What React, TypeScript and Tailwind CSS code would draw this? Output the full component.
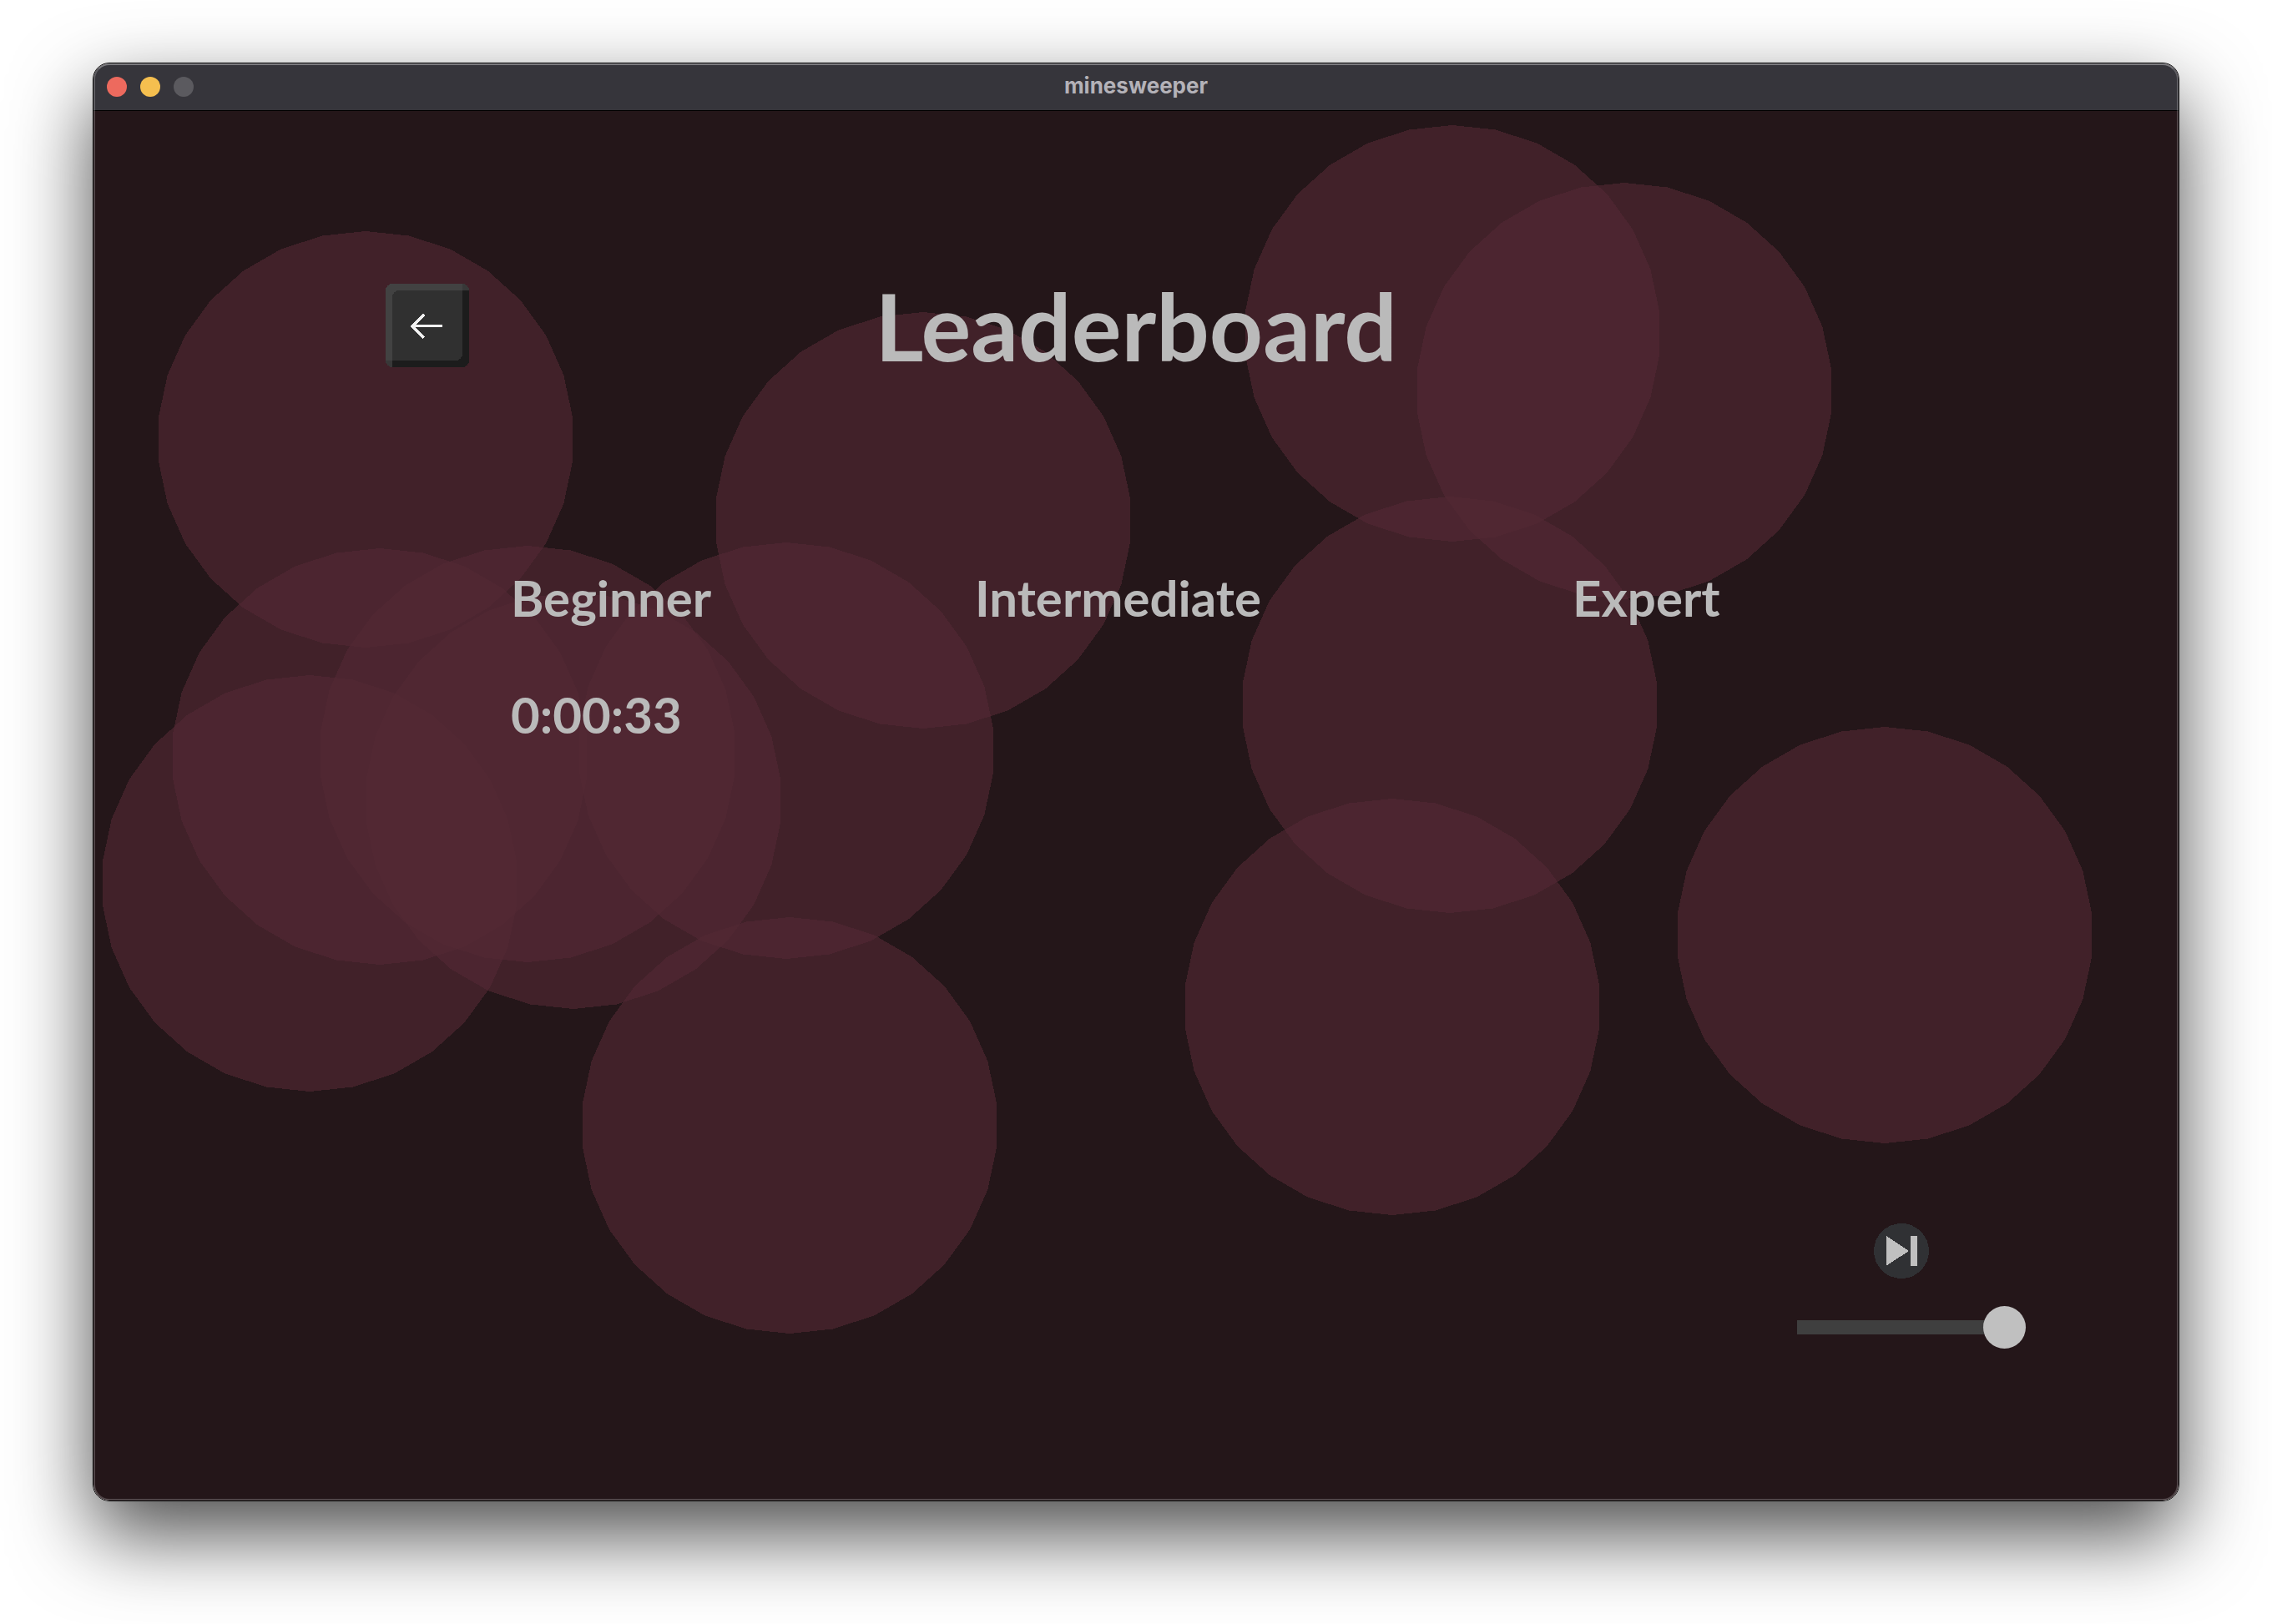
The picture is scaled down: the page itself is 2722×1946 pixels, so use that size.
import { useState } from "react";

const bubbles = [
  { x: 326, y: 394 },
  { x: 1834, y: 336 },
  { x: 1628, y: 267 },
  { x: 994, y: 491 },
  { x: 1625, y: 712 },
  { x: 1556, y: 1074 },
  { x: 2146, y: 988 },
  { x: 834, y: 1216 },
  { x: 830, y: 767 },
  { x: 343, y: 774 },
  { x: 520, y: 771 },
  { x: 575, y: 827 },
  { x: 259, y: 926 },
];

const RADIUS = 249.5;
const SIDES = 30;

function bubblePoints(cx: number, cy: number) {
  return Array.from({ length: SIDES }, (_, i) => {
    const a = (i / SIDES) * Math.PI * 2 - Math.PI / 2;
    return `${(cx + RADIUS * Math.cos(a)).toFixed(1)},${(cy + RADIUS * Math.sin(a)).toFixed(1)}`;
  }).join(" ");
}

function Bubbles() {
  return (
    <svg
      aria-hidden="true"
      className="pointer-events-none absolute inset-0 h-full w-full"
      viewBox="0 0 2498 1666"
      preserveAspectRatio="xMidYMid slice"
      shapeRendering="crispEdges"
    >
      {bubbles.map((b, i) => (
        <polygon key={i} points={bubblePoints(b.x, b.y)} fill="#542934" fillOpacity={0.61} />
      ))}
    </svg>
  );
}

function TitleBar() {
  return (
    <header className="grid h-[57px] grid-cols-[1fr_auto_1fr] items-center border-b border-black bg-[#36353b] px-4">
      <div className="flex gap-4">
        <button aria-label="Close" className="size-6 rounded-full bg-[#ed6a5e]" />
        <button aria-label="Minimize" className="size-6 rounded-full bg-[#f5bf4f]" />
        <button aria-label="Zoom" disabled className="size-6 rounded-full bg-[#5b5a5f]" />
      </div>
      <span className="pb-0.5 font-['Inter',sans-serif] text-[26px] leading-8 font-bold text-[#b4b2b8]">
        minesweeper
      </span>
    </header>
  );
}

function BackButton() {
  return (
    <button aria-label="Back" className="size-[100px]">
      <svg viewBox="0 0 100 100" className="size-full" shapeRendering="crispEdges">
        <rect width="100" height="100" rx="8" fill="#303030" />
        <path d="M8 0H92V8H16a8 8 0 0 0-8 8V92H0V8A8 8 0 0 1 8 0Z" fill="#424242" />
        <path d="M92 8H100V92a8 8 0 0 1-8 8H8V92H84a8 8 0 0 0 8-8Z" fill="#1c1c1c" />
        <path d="M92 0a8 8 0 0 1 8 8H92ZM0 92H8V100a8 8 0 0 1-8-8Z" fill="#383838" />
        <path d="M68 50.500H32M46 37L32 51L46 65" fill="none" stroke="#f2f2f2" strokeWidth="3" />
      </svg>
    </button>
  );
}

function AudioControls() {
  const [volume, setVolume] = useState(100);
  return (
    <div className="flex w-[274px] flex-col gap-[33px]">
      <button aria-label="Next track" className="ml-[92px] size-[66px]">
        <svg viewBox="0 0 66 66" className="size-full" shapeRendering="crispEdges">
          <circle cx="33" cy="33" r="33" fill="#303134" />
          <path d="M15 15L42 33L15 50.500ZM44 15H52V51H44Z" fill="#c0c0c0" />
        </svg>
      </button>
      <input
        type="range"
        aria-label="Music volume"
        min={0}
        max={100}
        value={volume}
        onChange={(e) => setVolume(Number(e.target.value))}
        className="h-[51px] w-full appearance-none bg-[linear-gradient(#3f3f3f,#3f3f3f)] bg-[length:250px_17px] bg-left bg-no-repeat [&::-webkit-slider-thumb]:size-[51px] [&::-webkit-slider-thumb]:appearance-none [&::-webkit-slider-thumb]:rounded-full [&::-webkit-slider-thumb]:bg-[#c0c0c0]"
      />
    </div>
  );
}

export default function App() {
  return (
    <div className="flex min-h-screen flex-col overflow-hidden bg-white px-[111px] pt-[75px] pb-[147px]">
      <div className="relative flex flex-1 flex-col rounded-[20px] border border-black shadow-[0_40px_96px_rgba(0,0,0,0.7)]">
        <div className="flex flex-1 flex-col overflow-hidden rounded-[19px] bg-[#241619]">
          <TitleBar />
          <main className="relative flex flex-1 flex-col pt-[207px] pb-[182px] font-['Lato',sans-serif] font-bold text-[#bababa]">
            <Bubbles />
            <div className="relative grid grid-cols-[1fr_auto_1fr] items-center px-[350px]">
              <div className="flex">
                <BackButton />
              </div>
              <h1 className="text-[112px] leading-[100px]">Leaderboard</h1>
            </div>
            <table className="relative mt-[206px] ml-[500px] table-fixed border-collapse text-left text-[60px] leading-[140px]">
              <colgroup>
                <col className="w-[556px]" />
                <col className="w-[716px]" />
                <col />
              </colgroup>
              <thead>
                <tr>
                  <th scope="col" className="p-0 font-bold">Beginner</th>
                  <th scope="col" className="p-0 font-bold">Intermediate</th>
                  <th scope="col" className="p-0 font-bold">Expert</th>
                </tr>
              </thead>
              <tbody>
                <tr>
                  <td className="p-0">0:00:33</td>
                  <td className="p-0" />
                  <td className="p-0" />
                </tr>
              </tbody>
            </table>
            <div className="relative mt-auto flex justify-end pr-[183px]">
              <AudioControls />
            </div>
          </main>
        </div>
        <div className="pointer-events-none absolute inset-0 rounded-[19px] border-2 border-white/20 border-t-white/35" />
      </div>
    </div>
  );
}
